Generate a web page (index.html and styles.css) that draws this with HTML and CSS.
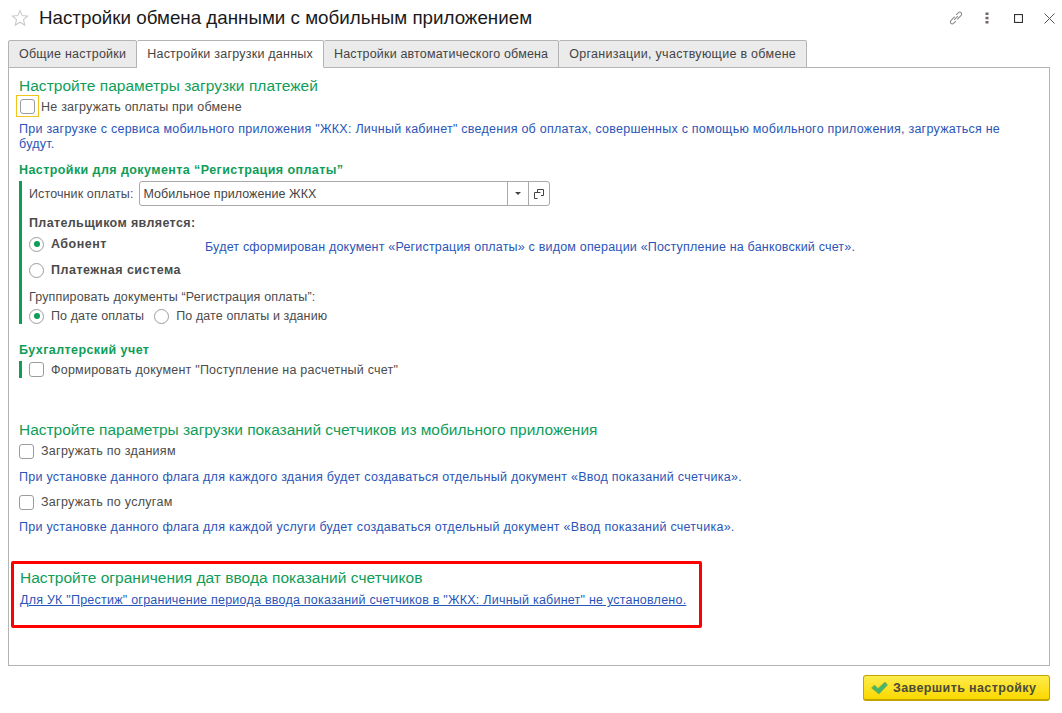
FILE: index.html
```html
<!DOCTYPE html>
<html lang="ru">
<head>
<meta charset="utf-8">
<title>Настройки обмена</title>
<link rel="stylesheet" href="styles.css">
</head>
<body>
<div class="app">
  <header class="titlebar">
    <svg class="star" width="18" height="18" viewBox="0 0 18 18"><path d="M9 1.6l2.2 5 5.3.5-4 3.6 1.2 5.3L9 13.2 4.300 16l1.200-5.300-4-3.600 5.300-.5z" fill="#fff" stroke="#c9c9c9" stroke-width="1.100"/></svg>
    <h1 class="title">Настройки обмена данными с мобильным приложением</h1>
    <div class="win-icons">
      <svg class="ico-link" width="16" height="16" viewBox="0 0 18 18" fill="none" stroke="#8a8a8a" stroke-width="1.200"><path d="M7.500 7.500l-4 4.200c-1.200 1.300-1 2.700-.2 3.400.9.800 2.200.7 3.200-.3l2.300-2.400"/><path d="M10.500 10.500l4-4.200c1.200-1.300 1-2.700.2-3.400-.9-.8-2.200-.7-3.200.3L9.200 5.600"/><path d="M7 11l4-4"/></svg>
      <svg class="ico-more" width="4" height="12" viewBox="0 0 4 12" fill="#6f6469"><rect x="0.500" y="0.500" width="3" height="2.500"/><rect x="0.500" y="4.800" width="3" height="2.500"/><rect x="0.500" y="9" width="3" height="2.500"/></svg>
      <svg class="ico-max" width="9" height="9" viewBox="0 0 9 9" fill="none" stroke="#333" stroke-width="1.100"><rect x="0.550" y="0.550" width="7.900" height="7.900"/></svg>
      <svg class="ico-close" width="11" height="11" viewBox="0 0 11 11" fill="none" stroke="#555" stroke-width="1"><path d="M.5.500l10 10M10.500.500l-10 10"/></svg>
    </div>
  </header>

  <nav class="tabs">
    <div class="tab">Общие настройки</div>
    <div class="tab active">Настройки загрузки данных</div>
    <div class="tab tab-auto">Настройки автоматического обмена</div>
    <div class="tab tab-org">Организации, участвующие в обмене</div>
  </nav>

  <main class="panel">
    <h2 class="heading h-first">Настройте параметры загрузки платежей</h2>
    <div class="row row-focus">
      <span class="focus"><span class="check"></span></span>
      <span class="focus-text">Не загружать оплаты при обмене</span>
    </div>
    <p class="note note-first">При загрузке с сервиса мобильного приложения "ЖКХ: Личный кабинет" сведения об оплатах, совершенных с помощью мобильного приложения, загружаться не будут.</p>

    <h3 class="sub sub-doc">Настройки для документа “Регистрация оплаты”</h3>
    <section class="group group-doc">
      <div class="source">
        <span class="source-label">Источник оплаты:</span>
        <div class="select">
          <span class="select-value">Мобильное приложение ЖКХ</span>
          <span class="select-btn"><svg width="6" height="3" viewBox="0 0 6 3"><path d="M0 0h6L3 3z" fill="#444"/></svg></span>
          <span class="select-btn"><svg width="10" height="10" viewBox="0 0 10 10" fill="none" stroke="#444"><path d="M3.500 3V.5h6v6H7"/><path d="M.5 3.500h6"/><path d="M.5 3.500v6h3"/></svg></span>
        </div>
      </div>
      <div class="payer-title">Плательщиком является:</div>
      <div class="payer">
        <div class="payer-options">
          <label class="row radio-row bold"><span class="radio on"></span>Абонент</label>
          <label class="row radio-row bold"><span class="radio"></span>Платежная система</label>
        </div>
        <p class="note payer-note">Будет сформирован документ «Регистрация оплаты» с видом операции «Поступление на банковский счет».</p>
      </div>
      <div class="group-title">Группировать документы “Регистрация оплаты”:</div>
      <div class="row inline-radios">
        <span class="radio on"></span><span class="r-text">По дате оплаты</span>
        <span class="radio"></span><span>По дате оплаты и зданию</span>
      </div>
    </section>

    <h3 class="sub sub-acc">Бухгалтерский учет</h3>
    <section class="group group-acc">
      <div class="row row-acc"><span class="check"></span><span>Формировать документ "Поступление на расчетный счет"</span></div>
    </section>

    <h2 class="heading h-second">Настройте параметры загрузки показаний счетчиков из мобильного приложения</h2>
    <div class="row row-plain row-tight"><span class="check"></span><span>Загружать по зданиям</span></div>
    <p class="note note-plain note-after-tight">При установке данного флага для каждого здания будет создаваться отдельный документ «Ввод показаний счетчика».</p>
    <div class="row row-plain"><span class="check"></span><span>Загружать по услугам</span></div>
    <p class="note note-plain">При установке данного флага для каждой услуги будет создаваться отдельный документ «Ввод показаний счетчика».</p>

    <section class="callout">
      <h2 class="heading">Настройте ограничения дат ввода показаний счетчиков</h2>
      <a class="callout-link" href="#">Для УК "Престиж" ограничение периода ввода показаний счетчиков в "ЖКХ: Личный кабинет" не установлено.</a>
    </section>
  </main>

  <footer class="footer">
    <button class="finish" type="button">
      <svg width="17" height="14" viewBox="0 0 17 14"><path d="M0.500 7l3-3 3.500 3.500L14 1l2.500 3L8 13z" fill="#46b56b" stroke="#7fae3a" stroke-width=".6"/></svg>
      Завершить настройку
    </button>
  </footer>
</div>
</body>
</html>
```

FILE: styles.css
```css
* { box-sizing: border-box; }
html, body { margin: 0; padding: 0; background: #fff; }
body {
  width: 1062px;
  height: 713px;
  overflow: hidden;
  font-family: "Liberation Sans", Arial, sans-serif;
  font-size: 12.5px;
  letter-spacing: .23px;
  color: #4b4b4b;
}
.app { display: flex; flex-direction: column; height: 713px; padding: 0 12px 0 8px; }

.titlebar { display: flex; align-items: center; height: 40px; padding: 0 0 4px 3px; flex: none; }
.star { flex: none; }
.title { margin: 0 0 0 10px; font-size: 18.78px; font-weight: 400; color: #1a1a1a; letter-spacing: 0; white-space: nowrap; }
.win-icons { display: flex; align-items: center; margin-left: auto; margin-right: -5px; }
.ico-link { margin-right: 21px; }
.ico-more { margin-right: 25px; }
.ico-max { margin-right: 21px; }

.tabs { display: flex; height: 28px; flex: none; position: relative; z-index: 1; }
.tab {
  height: 28px;
  padding: 6px 10px 0;
  background: #ebebeb;
  border: 1px solid #b4b4b4;
  border-left-width: 0;
  border-radius: 2px 2px 0 0;
  color: #444;
  white-space: nowrap;
}
.tab:first-child { border-left-width: 1px; }
.tab.active { background: #fff; border-bottom-color: #fff; }
.tab-auto { letter-spacing: .17px; }
.tab-org { letter-spacing: .29px; }

.panel {
  height: 599px;
  flex: none;
  margin-top: -1px;
  border: 1px solid #b4b4b4;
  padding: 0 10px 0 2px;
}

.heading { margin: 0; font-size: 15.5px; font-weight: 400; line-height: 20px; color: #0f9d58; letter-spacing: .03px; white-space: nowrap; padding-left: 8px; }
.h-first { margin-top: 8px; }
.h-second { margin-top: 42px; letter-spacing: -.03px; }

.row { display: flex; align-items: center; white-space: nowrap; }
.row-focus { height: 20px; margin-left: 5px; }
.focus { display: flex; align-items: center; justify-content: center; flex: none; width: 23px; height: 22px; border: 1px solid #f0c419; margin-right: 2px; }
.focus-text { padding-top: 1px; }
.check { display: block; flex: none; width: 15px; height: 15px; background: #fff; border: 1px solid #9c9c9c; border-radius: 3px; }

.note { margin: 0; color: #2a55b8; line-height: 15px; padding-left: 8px; }
.note-first { margin-top: 6px; max-width: 1000px; letter-spacing: .25px; }

.sub { margin: 0; font-size: 12.5px; font-weight: 700; line-height: 16px; color: #0f9d58; padding-left: 8px; letter-spacing: .42px; }
.sub-doc { margin-top: 10px; }
.sub-acc { margin-top: 18px; }

.group { margin-left: 8px; border-left: 3px solid #0f9d58; padding-left: 7px; }
.group-doc { margin-top: 3px; height: 143px; }
.group-acc { margin-top: 3px; height: 17px; }

.source { display: flex; align-items: center; height: 25px; }
.source-label { margin-right: 6px; letter-spacing: .11px; }
.select { display: flex; align-items: stretch; width: 411px; height: 25px; border: 1px solid #a9a9a9; border-radius: 3px; background: #fff; }
.select-value { flex: 1; padding-left: 3px; align-self: center; color: #444; letter-spacing: .06px; }
.select-btn { display: flex; align-items: center; justify-content: center; width: 21px; border-left: 1px solid #a9a9a9; }

.payer-title { font-weight: 700; margin-top: 9px; line-height: 16px; letter-spacing: .37px; }
.payer { display: flex; }
.payer-options { width: 176px; flex: none; }
.radio-row { height: 26px; }
.bold { font-weight: 700; letter-spacing: .5px; }
.radio { display: block; flex: none; position: relative; width: 15px; height: 15px; border: 1px solid #9c9c9c; border-radius: 50%; background: #fff; margin-right: 7px; }
.radio.on::after { content: ""; position: absolute; left: 3.500px; top: 3.500px; width: 6px; height: 6px; border-radius: 50%; background: #0f9d58; }
.payer-note { padding: 9px 0 0; white-space: nowrap; letter-spacing: .19px; }
.group-title { margin-top: 6px; line-height: 16px; letter-spacing: .15px; }
.inline-radios { height: 22px; margin-top: 0; letter-spacing: .1px; }
.r-text { margin-right: 10px; }

.row-acc { height: 17px; }
.row-acc .check { margin-right: 7px; }

.row-plain { height: 18px; margin-left: 8px; margin-top: 3px; letter-spacing: .28px; }
.row-plain .check { margin-right: 7px; }
.row-tight { margin-top: 2px; }
.note-plain { margin-top: 9px; margin-bottom: 8px; letter-spacing: .27px; }
.note-after-tight { margin-top: 10px; }

.callout { margin: 26px 0 0; width: 691px; height: 67px; border: 3px solid #f00; border-radius: 2px; padding: 4px 0 0; }
.callout .heading { padding-left: 6px; }
.callout-link { display: block; margin: 5px 0 0 6px; color: #2a55b8; text-decoration: underline; line-height: 15px; white-space: nowrap; }

.footer { display: flex; justify-content: flex-end; padding-top: 9px; }
.finish {
  display: flex; align-items: center; gap: 5px;
  width: 187px; height: 26px; padding: 0 0 0 7px;
  font: 700 12.5px "Liberation Sans", Arial, sans-serif; letter-spacing: .38px; color: #4b4b3a;
  background: linear-gradient(#ffec4d, #fcd800);
  border: 1px solid #c2a400; border-bottom-width: 2px; border-radius: 3px;
}
```
